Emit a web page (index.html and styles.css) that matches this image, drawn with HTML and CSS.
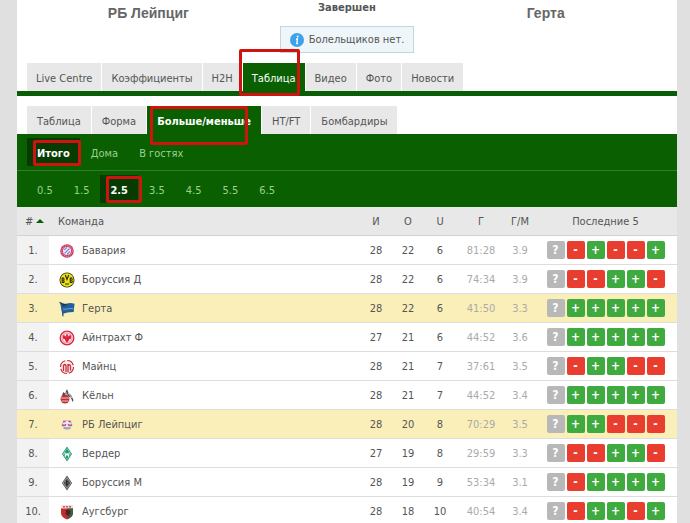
FILE: index.html
```html
<!DOCTYPE html>
<html lang="ru">
<head>
<meta charset="utf-8">
<title>РБ Лейпциг – Герта</title>
<link rel="stylesheet" href="styles.css">
</head>
<body>
<svg class="defs" aria-hidden="true">
  <symbol id="bayern" viewBox="0 0 16 16"><circle cx="8" cy="8" r="6.8" fill="#c93a62"/><circle cx="8" cy="8" r="5.3" fill="none" stroke="#e9a9bd" stroke-width="1" stroke-dasharray="1.2 .8"/><circle cx="8" cy="8" r="4" fill="#f7f2fa"/><path d="M5 7l3-2.5M5.5 10.500l5-5M8 11.500l3-3" stroke="#7d86c6" stroke-width="1.200"/></symbol>
  <symbol id="bvb" viewBox="0 0 16 16"><circle cx="8" cy="8" r="7.500" fill="#302f08"/><circle cx="8" cy="8" r="6.700" fill="#ede21a"/><path d="M3.200 6v4.500h1.400q1.200-1.200 0-2.200q1-1.200 0-2.300zM6.300 3l1.700 4.500 1.700-4.500M11.300 6v4.500h1.400q1.200-1.200 0-2.200q1-1.200 0-2.300zM6 12h4" fill="none" stroke="#25240a" stroke-width="1.100"/></symbol>
  <symbol id="hertha" viewBox="0 0 16 16"><path d="M.5 1.500l2 .7 1.500 13" fill="none" stroke="#263b4c" stroke-width="1.200"/><path d="M1 1.800q4 1.800 7 .7t7.500.2l-.8 8.300q-4 .3-6.200.5-3 .5-5 1.500z" fill="#1f5f9c"/><path d="M4 8q3 .7 5-.2t5.500 0" fill="none" stroke="#7fa9cc" stroke-width=".9"/><path d="M2 2l7 1.500-5 2z" fill="#203d56"/></symbol>
  <symbol id="eintracht" viewBox="0 0 16 16"><circle cx="8" cy="8" r="6.800" fill="#fbe4e6" stroke="#d8243c" stroke-width="1.300"/><circle cx="8" cy="8" r="5" fill="none" stroke="#e0576a" stroke-width=".6"/><path d="M8 3.500l1 1.800-.3 1.400 2.800-1.900.7 2.200-.7 2.200-1.300-.2-.7 2L8 12.800l-1.500-1.800-.7-2-1.300.2L3.800 7l.7-2.200 2.800 1.900L7 5.300z" fill="#d8243c"/></symbol>
  <symbol id="mainz" viewBox="0 0 16 16"><circle cx="8" cy="8" r="6.500" fill="#fbe9e9" stroke="#c4303c" stroke-width="1.200" stroke-dasharray="8 2"/><path d="M4.500 12V6.500q1.500-2 2.500 0V13M9 5v8.500M9 7q1.500-2.500 2.500 0v4.500" fill="none" stroke="#c4303c" stroke-width="1.300"/></symbol>
  <symbol id="koeln" viewBox="0 0 16 16"><circle cx="6" cy="11" r="4.500" fill="#b93236"/><path d="M1.500 10h9M2.500 13h7" stroke="#f1c6c5" stroke-width="1"/><path d="M3 7l1.500-3L6 5.500 8 1l1.500 4 2.500 2 2.500 5-.8 2-2-4.500-2.200-1L8 6 5 7.500z" fill="#57474a"/><path d="M9 5l4 5M7 4v3" stroke="#eee" stroke-width=".8"/></symbol>
  <symbol id="leipzig" viewBox="0 0 16 16"><path d="M3.500 5.500q4.500-4 9 0l-1 6q-3.500 2-7 0z" fill="#eee6ef" stroke="#b6b1cc" stroke-width=".8"/><path d="M4 4.500h2.500M9.500 4.500H12M2.800 8l3 .5L7 7.200M13.200 8l-3 .5L9 7.200" stroke="#b64e76" stroke-width="1.300" fill="none"/><path d="M5 11h6" stroke="#8378a8" stroke-width="1.200"/></symbol>
  <symbol id="werder" viewBox="0 0 16 16"><path d="M8 .5L13 8l-5 7.500L3 8z" fill="#159566"/><path d="M8 2.500L11.800 8 8 13.500 4.200 8z" fill="none" stroke="#c8eadb" stroke-width=".6"/><path d="M5.800 6.500l.9 3.500L8 7.500 9.300 10l.9-3.500" fill="none" stroke="#fff" stroke-width="1.100"/></symbol>
  <symbol id="gladbach" viewBox="0 0 16 16"><path d="M8 .5L13 8l-5 7.500L3 8z" fill="#454746"/><path d="M8 2.500L11.800 8 8 13.500 4.200 8z" fill="none" stroke="#b8b8b8" stroke-width=".8"/><path d="M6.500 5v6h2q2-1.500 0-3 1.700-1.500 0-3z" fill="#222" stroke="#898989" stroke-width=".6"/></symbol>
  <symbol id="augsburg" viewBox="0 0 16 16"><path d="M2 1h12v8q0 4-6 6.500Q2 13 2 9z" fill="#c72a2c"/><path d="M2 1h12v3.500H2z" fill="#efe1df"/><path d="M4 2.800h8" stroke="#c75555" stroke-width="1.500" stroke-dasharray="2 1"/><path d="M8.500 4.500H14V9q0 3.800-5.500 6z" fill="#386047"/><path d="M7 6l3-.5 1.500 2-.5 3L9 12 6.500 10z" fill="#4d2222"/></symbol>
</svg>
<main class="page">
  <header class="match">
    <h2 class="team">РБ Лейпциг</h2>
    <div class="state">
      <strong class="status">Завершен</strong>
      <p class="notice"><svg class="info" viewBox="0 0 14 14" aria-hidden="true"><circle cx="7" cy="7" r="7" fill="#3da2ec"/><path d="M6 6h1.500l-.8 4.500h1.300" fill="none" stroke="#fff" stroke-width="1.300"/><circle cx="7.700" cy="3.500" r="1" fill="#fff"/></svg>Болельщиков нет.</p>
    </div>
    <h2 class="team">Герта</h2>
  </header>
  <nav class="tabs">
    <a href="#">Live Centre</a><a href="#">Коэффициенты</a><a href="#">H2H</a><a href="#" class="active">Таблица<i class="mark mark-main"></i></a><a href="#">Видео</a><a href="#">Фото</a><a href="#">Новости</a>
  </nav>
  <nav class="tabs subtabs">
    <a href="#">Таблица</a><a href="#">Форма</a><a href="#" class="active">Больше/меньше<i class="mark mark-sub"></i></a><a href="#">HT/FT</a><a href="#">Бомбардиры</a>
  </nav>
  <nav class="filters">
    <a href="#" class="active">Итого<i class="mark mark-place"></i></a><a href="#">Дома</a><a href="#">В гостях</a>
  </nav>
  <nav class="filters goals">
    <a href="#">0.5</a><a href="#">1.5</a><a href="#" class="active">2.5<i class="mark mark-goals"></i></a><a href="#">3.5</a><a href="#">4.5</a><a href="#">5.5</a><a href="#">6.5</a>
  </nav>
  <table class="standings">
    <colgroup><col class="c-rank"><col><col class="c-num"><col class="c-num"><col class="c-num"><col class="c-score"><col class="c-avg"><col class="c-form"></colgroup>
    <thead>
      <tr><th class="rank-head"># <svg class="sort" viewBox="0 0 8 4" aria-hidden="true"><path d="M0 4l4-4 4 4z" fill="#0b5c06"/></svg></th><th class="team-head">Команда</th><th>И</th><th>О</th><th>U</th><th>Г</th><th>Г/М</th><th>Последние 5</th></tr>
    </thead>
    <tbody>
      <tr><td class="rank">1.</td><td class="club"><div><svg><use href="#bayern"/></svg>Бавария</div></td><td>28</td><td>22</td><td>6</td><td class="dim">81:28</td><td class="dim">3.9</td><td><div class="form"><b>?</b><b class="u">-</b><b class="o">+</b><b class="u">-</b><b class="u">-</b><b class="o">+</b></div></td></tr>
      <tr><td class="rank">2.</td><td class="club"><div><svg><use href="#bvb"/></svg>Боруссия Д</div></td><td>28</td><td>22</td><td>6</td><td class="dim">74:34</td><td class="dim">3.9</td><td><div class="form"><b>?</b><b class="u">-</b><b class="u">-</b><b class="o">+</b><b class="o">+</b><b class="u">-</b></div></td></tr>
      <tr class="current"><td class="rank">3.</td><td class="club"><div><svg><use href="#hertha"/></svg>Герта</div></td><td>28</td><td>22</td><td>6</td><td class="dim">41:50</td><td class="dim">3.3</td><td><div class="form"><b>?</b><b class="o">+</b><b class="o">+</b><b class="o">+</b><b class="o">+</b><b class="o">+</b></div></td></tr>
      <tr><td class="rank">4.</td><td class="club"><div><svg><use href="#eintracht"/></svg>Айнтрахт Ф</div></td><td>27</td><td>21</td><td>6</td><td class="dim">44:52</td><td class="dim">3.6</td><td><div class="form"><b>?</b><b class="o">+</b><b class="o">+</b><b class="o">+</b><b class="o">+</b><b class="o">+</b></div></td></tr>
      <tr><td class="rank">5.</td><td class="club"><div><svg><use href="#mainz"/></svg>Майнц</div></td><td>28</td><td>21</td><td>7</td><td class="dim">37:61</td><td class="dim">3.5</td><td><div class="form"><b>?</b><b class="u">-</b><b class="o">+</b><b class="o">+</b><b class="u">-</b><b class="u">-</b></div></td></tr>
      <tr><td class="rank">6.</td><td class="club"><div><svg><use href="#koeln"/></svg>Кёльн</div></td><td>28</td><td>21</td><td>7</td><td class="dim">44:52</td><td class="dim">3.4</td><td><div class="form"><b>?</b><b class="o">+</b><b class="o">+</b><b class="o">+</b><b class="o">+</b><b class="o">+</b></div></td></tr>
      <tr class="current"><td class="rank">7.</td><td class="club"><div><svg><use href="#leipzig"/></svg>РБ Лейпциг</div></td><td>28</td><td>20</td><td>8</td><td class="dim">70:29</td><td class="dim">3.5</td><td><div class="form"><b>?</b><b class="o">+</b><b class="o">+</b><b class="u">-</b><b class="u">-</b><b class="u">-</b></div></td></tr>
      <tr><td class="rank">8.</td><td class="club"><div><svg><use href="#werder"/></svg>Вердер</div></td><td>27</td><td>19</td><td>8</td><td class="dim">29:59</td><td class="dim">3.3</td><td><div class="form"><b>?</b><b class="u">-</b><b class="u">-</b><b class="o">+</b><b class="o">+</b><b class="u">-</b></div></td></tr>
      <tr><td class="rank">9.</td><td class="club"><div><svg><use href="#gladbach"/></svg>Боруссия М</div></td><td>28</td><td>19</td><td>9</td><td class="dim">53:34</td><td class="dim">3.1</td><td><div class="form"><b>?</b><b class="u">-</b><b class="o">+</b><b class="o">+</b><b class="o">+</b><b class="o">+</b></div></td></tr>
      <tr><td class="rank">10.</td><td class="club"><div><svg><use href="#augsburg"/></svg>Аугсбург</div></td><td>28</td><td>18</td><td>10</td><td class="dim">40:54</td><td class="dim">3.4</td><td><div class="form"><b>?</b><b class="u">-</b><b class="o">+</b><b class="o">+</b><b class="u">-</b><b class="o">+</b></div></td></tr>
    </tbody>
  </table>
</main>
</body>
</html>
```
FILE: styles.css
```css
* { box-sizing: border-box; }
html { overflow: hidden; }
body {
  margin: 0;
  padding: 0 13px 0 17px;
  background: #e0e0e0;
  color: #555;
  font: 11px/16px Tahoma, "DejaVu Sans Condensed", "DejaVu Sans", sans-serif;
}
a { color: inherit; text-decoration: none; }
.defs { position: absolute; width: 0; height: 0; }
.page { background: #fff; }

.match {
  display: grid;
  grid-template-columns: 2fr 1fr 2fr;
  padding-bottom: 10px;
}
.team {
  margin: 0;
  padding-top: 5px;
  font: bold 14px/16px "Liberation Sans", sans-serif;
  text-align: center;
  color: #666;
}
.state { display: flex; flex-direction: column; align-items: center; gap: 10px; }
.notice {
  display: flex;
  align-items: center;
  gap: 5px;
  height: 27px;
  margin: 0;
  padding: 0 9px;
  border: 1px solid #c3d5e0;
  background: #eef6fa;
  white-space: nowrap;
}
.info { width: 14px; height: 14px; }

.tabs {
  display: flex;
  gap: 1px;
  padding: 0 10px;
  border-bottom: 5px solid #0b5c06;
}
.tabs a {
  position: relative;
  height: 28px;
  padding: 8px 9px 0;
  background: #e8e8e8;
}
.tabs .active { background: #0a5f00; color: #fff; }
.subtabs { padding-top: 10px; border-bottom: 0; }
.subtabs a { padding: 8px 10px 0; }
.subtabs .active { font-weight: bold; }

.filters {
  display: flex;
  gap: 1px;
  padding: 4px 10px;
  background: #0a5f00;
  color: #9bcf94;
}
.filters a { position: relative; height: 28px; padding: 8px 10px 0; }
.filters .active { background: #063c02; color: #fff; font-weight: bold; }
.goals { border-top: 1px solid #2f7d28; }

/* Highlight frames laid over the selected tabs */
.mark { position: absolute; border: 3px solid #cf1410; border-radius: 2px; z-index: 1; pointer-events: none; }
.mark-main { inset: -14px 5px -5px -4px; }
.mark-sub { inset: 0 13px -11px 3px; }
.mark-place { inset: 2px -1px 0 6px; }
.mark-goals { inset: 1px -4px 0 6px; }

.standings { width: 100%; table-layout: fixed; border-collapse: separate; border-spacing: 0; }
.c-rank { width: 32px; }
.c-num { width: 32px; }
.c-score { width: 50px; }
.c-avg { width: 28px; }
.c-form { width: 143px; }
th, td {
  height: 29px;
  padding: 2px 0 0;
  border-bottom: 1px solid #ddd;
  font-weight: normal;
  text-align: center;
}
td:last-child { padding: 0; }
th { background: #e8e8e8; border-color: #d2d2d2; white-space: nowrap; }
.rank-head { text-align: left; padding-left: 8px; }
.sort { width: 8px; height: 4px; vertical-align: 2px; }
.team-head { text-align: left; padding-left: 9px; }
.rank { background: #f2f2f2; }
.club div { display: flex; align-items: center; gap: 7px; padding-left: 10px; }
.club svg { width: 16px; height: 16px; }
.dim { color: #aaa; }
.current td { background: #fbefb9; }
.form { display: flex; justify-content: center; gap: 2px; }
.form b {
  width: 18px;
  height: 18px;
  border-radius: 2px;
  background: #b8b8b8;
  color: #fff;
  font-size: 12px;
  line-height: 18px;
}
.form .u { background: #e93d30; }
.form .o { background: #3faa40; }
```
